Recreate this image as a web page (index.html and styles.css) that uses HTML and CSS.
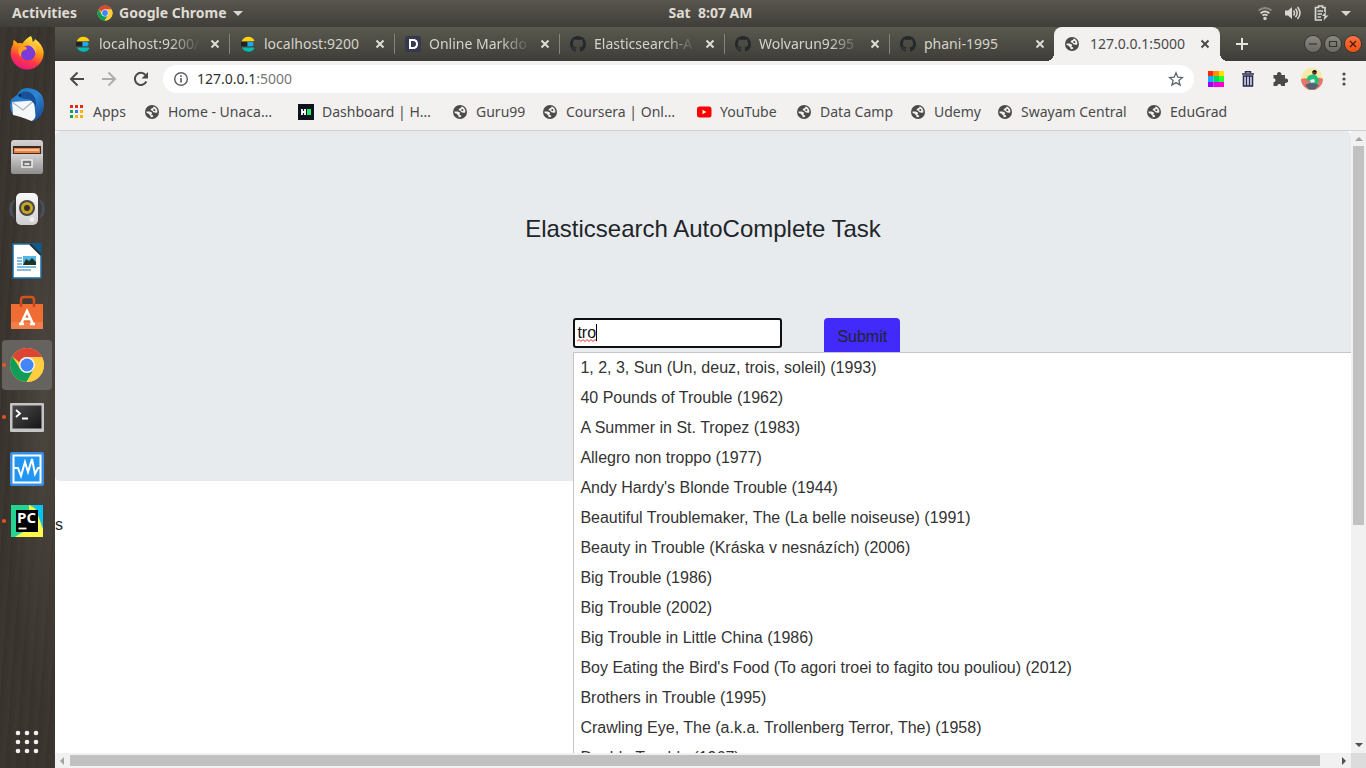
FILE: index.html
```html
<!DOCTYPE html>
<html lang="en">
<head>
<meta charset="utf-8">
<meta name="viewport" content="width=device-width, initial-scale=1">
<title>127.0.0.1:5000</title>
<link rel="stylesheet" href="styles.css">
</head>
<body>
<svg class="defs" aria-hidden="true">
  <defs>
    <linearGradient id="ffBody" x1="0.7" y1="0" x2="0.3" y2="1"><stop offset="0" stop-color="#fff44f"/><stop offset="0.4" stop-color="#ff980e"/><stop offset="0.7" stop-color="#ff3647"/><stop offset="1" stop-color="#e31587"/></linearGradient>
    <linearGradient id="tbBody" x1="0" y1="0" x2="1" y2="1"><stop offset="0" stop-color="#1f6fb5"/><stop offset="0.5" stop-color="#2f86d6"/><stop offset="1" stop-color="#123f86"/></linearGradient>
    <linearGradient id="grey" x1="0" y1="0" x2="0" y2="1"><stop offset="0" stop-color="#d2d2d2"/><stop offset="1" stop-color="#8d8d8d"/></linearGradient>
    <linearGradient id="white" x1="0" y1="0" x2="0" y2="1"><stop offset="0" stop-color="#fafafa"/><stop offset="1" stop-color="#cfcfcf"/></linearGradient>
    <linearGradient id="screen" x1="0" y1="0" x2="1" y2="1"><stop offset="0" stop-color="#4a4a4a"/><stop offset="1" stop-color="#161616"/></linearGradient>
    <linearGradient id="pc" x1="0" y1="0" x2="1" y2="0.3"><stop offset="0" stop-color="#21d789"/><stop offset="0.6" stop-color="#27d0a0"/><stop offset="1" stop-color="#07c3f2"/></linearGradient>
  </defs>
  <symbol id="globe" viewBox="0 0 16 16"><circle cx="8" cy="8" r="7" fill="#4a4a4a"/><path d="M12.300 4.200Q11 2.600 9.600 2.600 9.500 4 8 4.300 6.400 4.800 6.600 6.300 8 6.300 8.600 7.300 9.200 8.600 10.600 8.600 12 9.300 13.400 8.200 13.600 5.800 12.300 4.200zM10 4.800L11.600 6 10.500 7.200 9 6.200zM2.500 7.500H5.500Q8.200 7.900 8.300 9.600 7 10 7.600 11 9.400 11 9.400 12.200 8.500 13.600 6.600 13.300 7 11.600 5.600 11 5.300 9.300 2.600 9z" fill="#f2f1f0" fill-rule="evenodd"/></symbol>
  <symbol id="github" viewBox="0 0 16 16"><path fill="#24292e" d="M8 0C3.580 0 0 3.580 0 8c0 3.540 2.290 6.530 5.470 7.590.4.070.55-.17.550-.38 0-.19-.01-.82-.01-1.490-2.010.37-2.530-.49-2.690-.94-.09-.23-.48-.94-.82-1.130-.28-.15-.68-.52-.01-.53.63-.01 1.080.58 1.230.82.720 1.210 1.870.870 2.330.660.070-.52.280-.87.510-1.070-1.780-.2-3.640-.89-3.640-3.950 0-.87.310-1.590.82-2.150-.08-.2-.36-1.020.08-2.120 0 0 .67-.21 2.200.82.640-.18 1.320-.27 2-.27s1.360.09 2 .27c1.530-1.040 2.200-.82 2.200-.82.440 1.100.160 1.920.080 2.120.510.560.820 1.270.820 2.150 0 3.070-1.870 3.750-3.650 3.950.290.250.540.730.540 1.480 0 1.070-.01 1.930-.01 2.200 0 .21.150.460.550.380A8.010 8.010 0 0016 8c0-4.420-3.580-8-8-8z"/></symbol>
  <symbol id="elastic" viewBox="0 0 16 16"><path d="M2 4.500A7 7 0 0 1 14.500 4.500Q14 5.300 12.500 5.300H2z" fill="#fed10a"/><path d="M1 6h6.500v4.300H1z" fill="#222"/><path d="M7.500 6H12q1.500 0 1.500 2t-1.500 2.300H7.500z" fill="#1ba9f5"/><path d="M2 11.500h11q1.200 0 1.500.700A7 7 0 0 1 2 11.500z" fill="#02bcb0"/></symbol>
  <symbol id="chrome" viewBox="0 0 36 36"><circle cx="18" cy="18" r="17" fill="#fc3"/><path d="M3.300 9.500A17 17 0 0 1 32.700 9.500L33 10H18a8 8 0 0 0-7.500 5.200z" fill="#db4437"/><path d="M3.300 9.500A17 17 0 0 0 17.500 35l7.500-13-7-4-7 3.500z" fill="#0f9d58"/><path d="M17.500 35A17 17 0 0 0 33 10H18l7 12z" fill="#ffcd40"/><circle cx="18" cy="18" r="8" fill="#f1f1f1"/><circle cx="18" cy="18" r="6.500" fill="#4285f4"/></symbol>
  <symbol id="close" viewBox="0 0 16 16"><path d="M4.500 4.500l7 7m0-7l-7 7" stroke="currentColor" stroke-width="2" fill="none"/></symbol>
</svg>

<header class="panel">
  <div class="panel-left">
    <button class="panel-btn">Activities</button>
    <button class="panel-btn"><svg class="i16"><use href="#chrome"/></svg>Google Chrome<span class="caret-down"></span></button>
  </div>
  <time class="clock">Sat&nbsp; 8:07 AM</time>
  <div class="panel-right">
    <svg class="i16" viewBox="0 0 16 16" fill="none" stroke="#d8d6d1" stroke-width="1.800"><path d="M1.500 5.500q6.500-5 13 0" stroke="#8c8a85"/><path d="M3.600 8.200q4.400-3.400 8.800 0M5.500 10.600q2.500-1.800 5 0"/><circle cx="8" cy="13.500" r="1.700" fill="#d8d6d1" stroke="none"/></svg>
    <svg class="i16" viewBox="0 0 16 16"><path d="M0 5.500h3L7 2v12l-4-3.500H0z" fill="#d8d6d1"/><path d="M8.500 5.500q2 2.500 0 5M10.500 3.800q3.300 4.200 0 8.400M12.500 2q5 6 0 12" fill="none" stroke="#d8d6d1" stroke-width="1.500"/></svg>
    <svg class="i16" viewBox="0 0 16 16" fill="none" stroke="#d8d6d1" stroke-width="1.700"><path d="M12 7V2.500H9.500V1h-4v1.500H2.500V15H9M4.500 6H10M4.500 9H9M4.500 12H8"/><path d="M13 6.500L9 11h2.500L10.500 15.500 15.500 10.500H12.500z" fill="#d8d6d1" stroke="none"/></svg>
    <span class="caret-down"></span>
  </div>
</header>

<div class="desktop">
  <nav class="dock" aria-label="Dock">
    <button class="app" aria-label="Firefox"><svg viewBox="0 0 36 36"><path d="M22 1q2 3 1.500 6 2-.3 2.500-3 7 5 8.500 12A16.500 16.500 0 1 1 4 9.500l.5-4.500Q7 6 8.500 8.200q3-.7 5 .3Q17 3 22 1z" fill="url(#ffBody)"/><circle cx="19" cy="18" r="7.500" fill="#7b3bd8"/><path d="M12.500 11q5 .5 5.500 2.200-.5 1.800-3.800 2.200Q11 17.500 12.500 22q-4-2.500-3-8z" fill="#ff9f22"/><path d="M23.500 7q5 4 3.500 12-2-7-7-8.500z" fill="#ffbd4f"/></svg></button>
    <button class="app" aria-label="Thunderbird"><svg viewBox="0 0 36 36"><path d="M8 8Q12-1 22 1.500 34 4 35 16q1 14-12 18.500 3-4 3.500-7L4 28Q-1 20 2.500 12z" fill="url(#tbBody)"/><path d="M3 15l22-1.500L26.500 29q-1 4-4 5Q10 29 4 28z" fill="#f6f7f9"/><path d="M3 15l11 8 11-9.500" fill="none" stroke="#aab3c0" stroke-width="1.200"/><path d="M9 8q5-5 11-3 8 3 7 16Q24 12 17 12q-5 0-8-4z" fill="#174f99"/><circle cx="11" cy="8.500" r="1.300" fill="#0b2348"/></svg></button>
    <button class="app" aria-label="Files"><svg viewBox="0 0 36 36"><rect x="2" y="1" width="32" height="34" rx="3" fill="url(#grey)"/><path d="M4 7h28v8H4z" fill="#3b2a22"/><path d="M5 9h26v5H5z" fill="#f0813a"/><path d="M6 11h24" stroke="#fff"/><path d="M2 15h32v17q0 3-3 3H5q-3 0-3-3z" fill="url(#grey)"/><rect x="13" y="21" width="10" height="7" fill="#777" stroke="#eee" stroke-width="1.500"/><path d="M15.500 25h5" stroke="#fff" stroke-width="1.500"/></svg></button>
    <button class="app" aria-label="Rhythmbox"><svg viewBox="0 0 36 36"><path d="M5 9q-5 9 0 18M2.500 11q-3 7 0 14M31 9q5 9 0 18M33.500 11q3 7 0 14" stroke="#46525f" fill="none" stroke-width="1.500"/><rect x="7" y="2" width="22" height="32" rx="5" fill="url(#white)"/><circle cx="18" cy="17" r="8" fill="#474747"/><circle cx="18" cy="17" r="6" fill="#c9a51d"/><circle cx="18" cy="17" r="3" fill="#333"/><circle cx="23" cy="28.500" r="2.500" fill="#eee"/></svg></button>
    <button class="app" aria-label="LibreOffice Writer"><svg viewBox="0 0 36 36"><path d="M4 1h19l9 10v24H4z" fill="#fff" stroke="#1a6fa8" stroke-width="1.500"/><path d="M21 0h11.500v12z" fill="#0f5a90"/><path d="M21 1l11 11" stroke="#233" stroke-width="2"/><path d="M8 15h5M8 18h5M8 21h5M8 24h19M8 27h14" stroke="#62a7d4" stroke-width="1.600"/><rect x="14" y="13" width="13" height="9" fill="#52b7e6"/><path d="M14 22l3-6 3 2 3-3 4 4v3z" fill="#1d3428"/></svg></button>
    <button class="app" aria-label="Ubuntu Software"><svg viewBox="0 0 36 36"><path d="M12 12V5q0-3 3-3h7q3 0 3 3v7" fill="none" stroke="#d4521c" stroke-width="2.500"/><path d="M2 9h32v25H2z" fill="#ef6c33"/><path d="M2 27h32v7H2z" fill="#f47e49"/><path d="M12 8v4M25 8v4" stroke="#c7471a" stroke-width="2.500"/><path d="M12 29l6-13 6 13M13.500 24h9M10 29h5M21 29h5" fill="none" stroke="#fff" stroke-width="2.600"/></svg></button>
    <button class="app running active" aria-label="Google Chrome"><svg><use href="#chrome"/></svg></button>
    <button class="app running" aria-label="Terminal"><svg viewBox="0 0 36 36"><rect x="1" y="4" width="34" height="29" rx="1" fill="#c5c5c5"/><rect x="3.500" y="6.500" width="29" height="23" fill="url(#screen)"/><path d="M7 11l4 3.500L7 18M13 19.500h6" fill="none" stroke="#fff" stroke-width="1.800"/></svg></button>
    <button class="app" aria-label="System Monitor"><svg viewBox="0 0 36 36"><rect x="1" y="1" width="34" height="34" rx="2" fill="#338fe8"/><rect x="4.500" y="4.500" width="27" height="27" fill="#2196f3" stroke="#fff" stroke-width="2"/><path d="M5 17h4l3 8 4-14 3 10 4-13 3 15 3-6h2" fill="none" stroke="#fff" stroke-width="2"/></svg></button>
    <button class="app running" aria-label="PyCharm"><svg viewBox="0 0 36 36"><path d="M2 2h32v32H2z" fill="url(#pc)"/><path d="M20 2l7 4 7 20v8H6l14-9z" fill="#fcf84a"/><path d="M25 2h9v22z" fill="#07c3f2"/><rect x="7" y="7" width="22" height="22" fill="#000"/><path d="M9.500 25.500h8" stroke="#fff" stroke-width="1.800"/><text x="8" y="20" class="pc-text">PC</text></svg></button>
    <button class="app show-apps" aria-label="Show Applications"><svg viewBox="0 0 36 36" fill="#f2f1f0"><circle cx="9" cy="9" r="2.300"/><circle cx="18" cy="9" r="2.300"/><circle cx="27" cy="9" r="2.300"/><circle cx="9" cy="18" r="2.300"/><circle cx="18" cy="18" r="2.300"/><circle cx="27" cy="18" r="2.300"/><circle cx="9" cy="27" r="2.300"/><circle cx="18" cy="27" r="2.300"/><circle cx="27" cy="27" r="2.300"/></svg></button>
  </nav>

  <div class="browser">
    <div class="tabstrip">
      <div class="tab"><svg class="i16"><use href="#elastic"/></svg><span class="tab-title fade">localhost:9200/</span><button class="tab-close" aria-label="Close tab"><svg class="i16"><use href="#close"/></svg></button></div>
      <div class="tab"><svg class="i16"><use href="#elastic"/></svg><span class="tab-title">localhost:9200</span><button class="tab-close" aria-label="Close tab"><svg class="i16"><use href="#close"/></svg></button></div>
      <div class="tab"><svg class="i16" viewBox="0 0 16 16"><rect width="16" height="16" rx="2.500" fill="#36384f"/><path d="M5 4h3q4 0 4 4t-4 4H5z" fill="none" stroke="#fff" stroke-width="2"/></svg><span class="tab-title fade">Online Markdo</span><button class="tab-close" aria-label="Close tab"><svg class="i16"><use href="#close"/></svg></button></div>
      <div class="tab"><svg class="i16"><use href="#github"/></svg><span class="tab-title fade">Elasticsearch-A</span><button class="tab-close" aria-label="Close tab"><svg class="i16"><use href="#close"/></svg></button></div>
      <div class="tab"><svg class="i16"><use href="#github"/></svg><span class="tab-title fade">Wolvarun9295</span><button class="tab-close" aria-label="Close tab"><svg class="i16"><use href="#close"/></svg></button></div>
      <div class="tab before-current"><svg class="i16"><use href="#github"/></svg><span class="tab-title">phani-1995</span><button class="tab-close" aria-label="Close tab"><svg class="i16"><use href="#close"/></svg></button></div>
      <div class="tab current"><svg class="i16"><use href="#globe"/></svg><span class="tab-title">127.0.0.1:5000</span><button class="tab-close" aria-label="Close tab"><svg class="i16"><use href="#close"/></svg></button></div>
      <button class="new-tab" aria-label="New tab"><svg class="i16" viewBox="0 0 16 16"><path d="M8 2v12M2 8h12" stroke="#e6e4de" stroke-width="2"/></svg></button>
      <div class="window-controls">
        <button class="wc" aria-label="Minimize"><svg viewBox="0 0 16 16"><path d="M4 8h8" stroke="#34332e" stroke-width="1.200"/></svg></button>
        <button class="wc" aria-label="Maximize"><svg viewBox="0 0 16 16"><path d="M4.500 5.500h7v5h-7z" fill="none" stroke="#34332e" stroke-width="1.200"/></svg></button>
        <button class="wc wc-close" aria-label="Close"><svg viewBox="0 0 16 16"><path d="M5 5l6 6m0-6l-6 6" stroke="#4a1d0a" stroke-width="1.400"/></svg></button>
      </div>
    </div>

    <div class="toolbar">
      <button class="tool" aria-label="Back"><svg class="i16" viewBox="0 0 16 16"><path d="M15 8H2.500M8.500 1.500L2 8l6.500 6.500" fill="none" stroke="#4a4a4a" stroke-width="2"/></svg></button>
      <button class="tool" aria-label="Forward"><svg class="i16" viewBox="0 0 16 16"><path d="M1 8h12.500M7.500 1.500L14 8l-6.500 6.500" fill="none" stroke="#adadac" stroke-width="2"/></svg></button>
      <button class="tool" aria-label="Reload"><svg class="i16" viewBox="0 0 16 16"><path d="M13.300 10.500A6 6 0 1 1 12.500 4" fill="none" stroke="#4a4a4a" stroke-width="2"/><path d="M15 1v6.500H8.500z" fill="#4a4a4a"/></svg></button>
      <div class="omnibox">
        <svg class="i16" viewBox="0 0 16 16"><circle cx="8" cy="8" r="6.300" fill="none" stroke="#5f6368" stroke-width="1.500"/><path d="M8 7v4.500M8 4.300v1.600" stroke="#5f6368" stroke-width="1.700"/></svg>
        <span class="url">127.0.0.1<span class="port">:5000</span></span>
        <button class="tool-star" aria-label="Bookmark this page"><svg class="i16" viewBox="0 0 16 16"><path d="M8 1.800l1.800 4.400 4.700.3-3.600 3 1.200 4.600L8 11.600l-4.100 2.500 1.200-4.600-3.600-3 4.700-.3z" fill="none" stroke="#5f6368" stroke-width="1.300"/></svg></button>
      </div>
      <div class="extensions">
        <button class="tool" aria-label="Colour picker"><svg class="i16" viewBox="0 0 16 16"><path d="M0 0h5.500v5H0z" fill="#ff2600"/><path d="M5.500 0H11v5H5.500z" fill="#ff9000"/><path d="M11 0h5v5h-5z" fill="#ffe100"/><path d="M0 5h5.500v6H0z" fill="#19a7ff"/><path d="M5.500 5H11v6H5.500z" fill="#00d95a"/><path d="M11 5h5v6h-5z" fill="#2bff2b"/><path d="M0 11h5.500v5H0z" fill="#9d00ff"/><path d="M5.500 11H11v5H5.500z" fill="#e600e6"/><path d="M11 11h5v5h-5z" fill="#ff00d4"/></svg></button>
        <button class="tool" aria-label="Clear history"><svg class="i16" viewBox="0 0 16 16"><path d="M5.500 2V.8h5V2M2 3h12" fill="none" stroke="#2b2850" stroke-width="1.500"/><path d="M3.500 5h9v10h-9z" fill="#d9d9e4" stroke="#2b2850" stroke-width="1.500"/><path d="M6.500 5v10M9.500 5v10" stroke="#2b2850" stroke-width="1.300"/></svg></button>
        <button class="tool" aria-label="Extensions"><svg class="i16" viewBox="0 0 16 16"><path d="M1.500 4h3.700a2.200 2.200 0 1 1 4 0H13v3.700a2.200 2.200 0 1 1 0 4V15H9.300a2 2 0 0 0-4 0H1.500v-3.700a2 2 0 0 0 0-4z" fill="#4a4a4a"/></svg></button>
        <button class="tool profile" aria-label="Profile"><svg class="avatar" viewBox="0 0 22 22"><circle cx="11" cy="11" r="11" fill="#f5eaa6"/><path d="M0 11q5-2 11 1 6-4 11-1a11 11 0 0 1-22 0z" fill="#e8776b"/><path d="M7 8q5-3 9 0l2 5-3 5H8l1-6-4 1z" fill="#21c07a"/><circle cx="13.500" cy="4.500" r="2.300" fill="#5a3423"/><path d="M11.300 4q2-4 4.600 0z" fill="#111"/><path d="M4 17q6-4 14 0l-4 4.500H8z" fill="#556276"/><path d="M9 12l4-1 1 3-4 1z" fill="#e4f1f5"/></svg></button>
        <button class="tool" aria-label="Menu"><svg class="i16" viewBox="0 0 16 16" fill="#4a4a4a"><circle cx="8" cy="3" r="1.600"/><circle cx="8" cy="8" r="1.600"/><circle cx="8" cy="13" r="1.600"/></svg></button>
      </div>
    </div>

    <nav class="bookmarks" aria-label="Bookmarks">
      <a href="#"><svg class="i16" viewBox="0 0 16 16"><path d="M1 1h3v3H1zM6 1h3v3H6zM11 1h3v3h-3z" fill="#e8261c"/><path d="M1 6h3v3H1zM1 11h3v3H1z" fill="#12a150"/><path d="M6 6h3v3H6z" fill="#3b78e7"/><path d="M11 6h3v3h-3zM6 11h3v3H6zM11 11h3v3h-3z" fill="#fbb605"/></svg>Apps</a>
      <a href="#"><svg class="i16"><use href="#globe"/></svg>Home - Unaca…</a>
      <a href="#"><svg class="i16" viewBox="0 0 16 16"><path d="M0 0h16v16H0z" fill="#0e141e"/><path d="M4 5v6M7 5v6M4 8h3" stroke="#fff" stroke-width="1.800"/><path d="M9 5h4v6H9z" fill="#1ee868"/></svg>Dashboard | H…</a>
      <a href="#"><svg class="i16"><use href="#globe"/></svg>Guru99</a>
      <a href="#"><svg class="i16"><use href="#globe"/></svg>Coursera | Onl…</a>
      <a href="#"><svg class="i16" viewBox="0 0 16 16"><rect x="1" y="2.500" width="14.500" height="11" rx="2.500" fill="#f00"/><path d="M6.500 5.800v4.400L10.300 8z" fill="#fff"/></svg>YouTube</a>
      <a href="#"><svg class="i16"><use href="#globe"/></svg>Data Camp</a>
      <a href="#"><svg class="i16"><use href="#globe"/></svg>Udemy</a>
      <a href="#"><svg class="i16"><use href="#globe"/></svg>Swayam Central</a>
      <a href="#"><svg class="i16"><use href="#globe"/></svg>EduGrad</a>
    </nav>

    <div class="viewport">
      <main class="page">
        <section class="jumbotron">
          <h1>Elasticsearch AutoComplete Task</h1>
          <form class="search">
            <div class="field">
              <input id="movie" type="text" value="tro" aria-label="Movie name" autocomplete="off" spellcheck="false">
              <svg class="squiggle" viewBox="0 0 20 3" aria-hidden="true"><path d="M0 2.500l2-2 2 2 2-2 2 2 2-2 2 2 2-2 2 2 2-2 2 2" fill="none" stroke="#f22"/></svg>
              <span class="text-caret"></span>
              <ul class="suggestions">
                <li>1, 2, 3, Sun (Un, deuz, trois, soleil) (1993)</li>
                <li>40 Pounds of Trouble (1962)</li>
                <li>A Summer in St. Tropez (1983)</li>
                <li>Allegro non troppo (1977)</li>
                <li>Andy Hardy's Blonde Trouble (1944)</li>
                <li>Beautiful Troublemaker, The (La belle noiseuse) (1991)</li>
                <li>Beauty in Trouble (Kráska v nesnázích) (2006)</li>
                <li>Big Trouble (1986)</li>
                <li>Big Trouble (2002)</li>
                <li>Big Trouble in Little China (1986)</li>
                <li>Boy Eating the Bird's Food (To agori troei to fagito tou pouliou) (2012)</li>
                <li>Brothers in Trouble (1995)</li>
                <li>Crawling Eye, The (a.k.a. Trollenberg Terror, The) (1958)</li>
                <li>Double Trouble (1967)</li>
              </ul>
            </div>
            <button class="submit" type="button">Submit</button>
          </form>
        </section>
        <p class="stray">s</p>
      </main>
      <div class="scroll-v"><span class="arrow up"></span><div class="track"><div class="thumb"></div></div><span class="arrow down"></span></div>
      <div class="scroll-h"><span class="arrow left"></span><div class="track"><div class="thumb"></div></div><span class="arrow right"></span></div>
      <div class="corner"></div>
    </div>
  </div>
</div>
</body>
</html>
```

FILE: styles.css
```css
* { box-sizing: border-box; }

body {
  margin: 0;
  height: 100vh;
  display: flex;
  flex-direction: column;
  overflow: hidden;
  font: 14px/20px "Noto Sans", sans-serif;
}

button {
  padding: 0;
  border: 0;
  background: none;
  color: inherit;
  font: inherit;
}

svg { display: block; flex: none; }
.defs { position: absolute; width: 0; height: 0; }
.i16 { width: 16px; height: 16px; }

/* Top panel */
.panel {
  height: 27px;
  flex: none;
  display: grid;
  grid-template-columns: 1fr auto 1fr;
  align-items: center;
  padding: 0 15px 1px 12px;
  background: linear-gradient(#59564f, #403e39);
  color: #dfdbd2;
  font-weight: 700;
}
.panel-left, .panel-right, .panel-btn { display: flex; align-items: center; }
.panel-left { gap: 20px; }
.panel-btn { gap: 6px; }
.clock { padding-left: 58px; }
.panel-right { justify-content: flex-end; gap: 12px; }
.caret-down {
  border: 5px solid transparent;
  border-top-color: #d8d6d1;
  border-bottom: 0;
}

/* Dock */
.desktop { flex: 1; min-height: 0; display: flex; }
.dock {
  width: 55px;
  flex: none;
  display: flex;
  flex-direction: column;
  background:
    radial-gradient(ellipse at 80% 50%, #4b463e, transparent 60%),
    repeating-linear-gradient(94deg, #3a342f 0 3px, #3c3631 3px 7px, #38322e 7px 10px);
}
.app {
  height: 52px;
  display: flex;
  align-items: center;
  justify-content: center;
  padding-right: 1px;
  position: relative;
}
.app svg { width: 36px; height: 36px; }
.active { height: 50px; margin: 1px 3px 1px 2px; border-radius: 4px; background: #66625f; }
.running::before {
  content: "";
  position: absolute;
  left: 2px;
  top: 50%;
  width: 4px;
  height: 4px;
  margin-top: -2px;
  border-radius: 50%;
  background: #e95420;
}
.active::before { left: 0; }
.show-apps { margin-top: auto; }
.pc-text { font: 700 15px "Open Sans", sans-serif; fill: #fff; }

/* Browser chrome */
.browser {
  flex: 1;
  min-width: 0;
  display: flex;
  flex-direction: column;
  background: #f2f1f0;
  color: #4a4a4a;
}
.tabstrip {
  height: 34px;
  flex: none;
  display: flex;
  align-items: center;
  padding-left: 10px;
  background: linear-gradient(#5a594f, #3e3d38);
  color: #d5d3c9;
}
.tab {
  width: 165px;
  height: 34px;
  flex: none;
  display: flex;
  align-items: center;
  padding: 0 7px 0 10px;
  position: relative;
}
.tab:not(.current):not(.before-current)::after {
  content: "";
  position: absolute;
  right: 0;
  top: 7px;
  width: 1px;
  height: 20px;
  background: #85837b;
}
.tab-title {
  flex: 1;
  min-width: 0;
  margin: 0 6px 0 8px;
  white-space: nowrap;
}
.fade { mask-image: linear-gradient(to right, #000 70%, transparent); }
.tab-close { color: #dedcd3; }
.tab.current { margin-left: -1px; width: 166px; background: #f2f1f0; border-radius: 8px 8px 0 0; color: #4a4a4a; }
.current .tab-close { color: #4a4a4a; }
.current .tab-title { margin-left: 10px; }
.current::before, .current::after {
  content: "";
  position: absolute;
  bottom: 0;
  width: 8px;
  height: 8px;
}
.current::before { left: -8px; background: radial-gradient(circle at 0 0, transparent 8px, #f2f1f0 8px); }
.current::after { right: -8px; background: radial-gradient(circle at 100% 0, transparent 8px, #f2f1f0 8px); }
.new-tab { margin-left: 14px; }
.window-controls { display: flex; gap: 4px; margin: 0 5px 0 auto; }
.wc { width: 16px; height: 16px; border-radius: 50%; background: linear-gradient(#8a8881, #6b6963); box-shadow: 0 0 0 1px #35342f; }
.wc-close { background: linear-gradient(#fb7242, #ee4e10); }

.toolbar {
  height: 36px;
  flex: none;
  display: flex;
  align-items: center;
  gap: 16px;
  padding: 4px 14px;
}
.omnibox {
  flex: 1;
  height: 28px;
  display: flex;
  align-items: center;
  gap: 8px;
  padding: 0 10px;
  margin: 0 -2px;
  border-radius: 14px;
  background: #fff;
}
.url { flex: 1; color: #303030; }
.port { color: #777; }
.extensions { display: flex; align-items: center; gap: 16px; }
.profile { margin: 0 -3px; }
.avatar { width: 22px; height: 22px; }

.bookmarks {
  height: 34px;
  flex: none;
  display: grid;
  grid-template-columns: 75px 154px 154px 90px 154px 100px 114px 87px 149px auto;
  align-items: center;
  padding: 0 0 4px 14px;
  border-bottom: 1px solid #d0d0cf;
}
.bookmarks a {
  display: flex;
  align-items: center;
  gap: 8px;
  color: #4a4a4a;
  text-decoration: none;
  white-space: nowrap;
}

/* Page */
.viewport {
  flex: 1;
  min-height: 0;
  display: grid;
  grid-template: minmax(0, 1fr) 15px / minmax(0, 1fr) 15px;
  background: #fff;
}
.page {
  position: relative;
  overflow: hidden;
  background: #fff;
  color: #212529;
  font: 16px/24px "Liberation Sans", Arial, sans-serif;
}
.jumbotron {
  height: 350px;
  padding: 83px 0 0;
  border-radius: 5px;
  background: #e8ebee;
}
.jumbotron h1 {
  margin: 0 0 74px;
  font-size: 24px;
  line-height: 30px;
  font-weight: 400;
  text-align: center;
}
.search { display: flex; align-items: flex-start; gap: 42px; padding-left: 40%; }
.field { position: relative; }
.field input {
  display: block;
  width: 209px;
  height: 30px;
  padding: 0 2px;
  border: 2px solid #101010;
  border-radius: 3px;
  outline: 0;
  background: #fff;
  color: #111;
  font: inherit;
}
.squiggle { position: absolute; left: 4px; top: 21px; width: 20px; height: 3px; }
.text-caret { position: absolute; left: 23px; top: 6px; width: 1px; height: 17px; background: #000; }
.submit {
  height: 38px;
  padding: 0 13px;
  border-radius: 4px;
  background: #422afb;
}
.suggestions {
  position: absolute;
  z-index: 1;
  left: 0;
  top: 34px;
  width: 100vw;
  margin: 0;
  padding: 0;
  list-style: none;
  border: 1px solid #c5c5c5;
  background: #fff;
  color: #333;
}
.suggestions li { padding: 3px 6px; }
.stray { margin: 32px 0 0; }

/* Scrollbars */
.scroll-v, .scroll-h { display: flex; align-items: center; background: #f1f1f1; }
.scroll-v { flex-direction: column; grid-area: 1 / 2; }
.scroll-h { grid-area: 2 / 1; }
.corner { background: #dcdcdc; }
.track { flex: 1; }
.scroll-v .track { width: 11px; }
.scroll-h .track { height: 11px; }
.thumb { width: 100%; height: 100%; background: #c1c1c1; }
.scroll-v .thumb { height: 64%; }
.scroll-h .thumb { width: 98.7%; }
.arrow { border: 4px solid transparent; }
.up { border-bottom-color: #a3a3a3; border-top: 0; margin: 6px 0 5px; }
.down { border-top-color: #505050; border-bottom: 0; margin: 5px 0 6px; }
.left { border-right-color: #a3a3a3; border-left: 0; margin: 0 6px 0 5px; }
.right { border-left-color: #505050; border-right: 0; margin: 0 5px 0 6px; }
```
